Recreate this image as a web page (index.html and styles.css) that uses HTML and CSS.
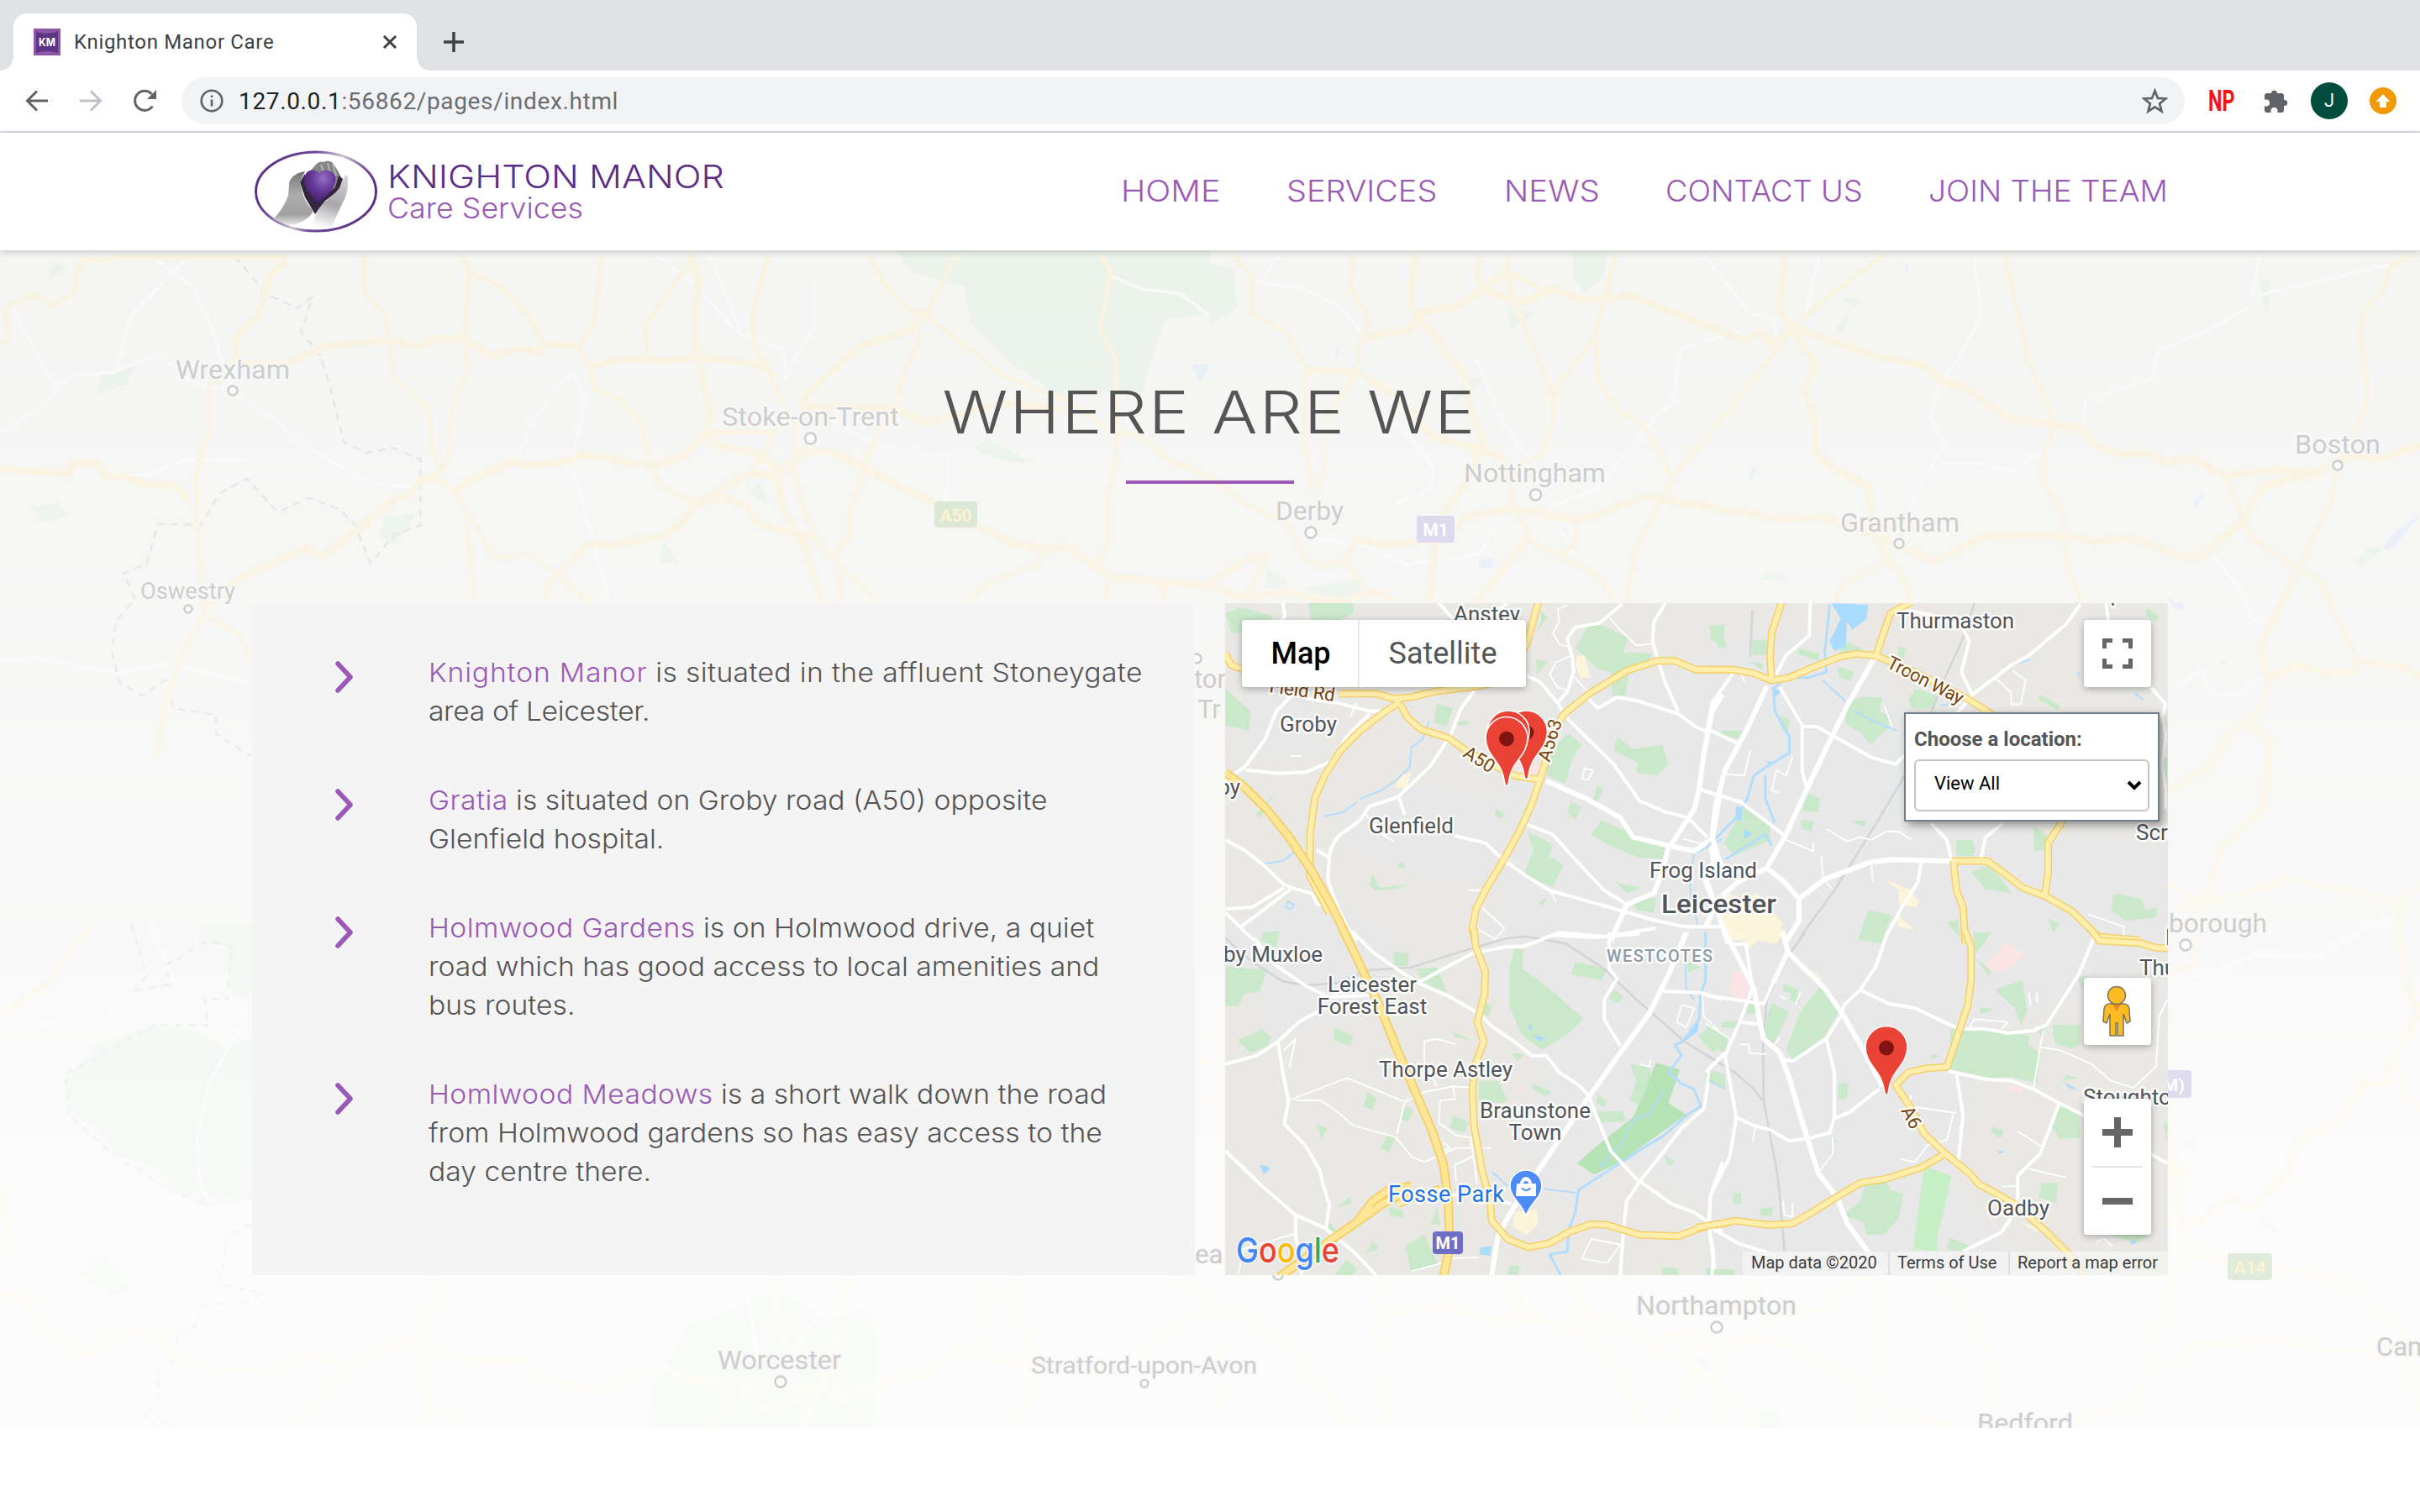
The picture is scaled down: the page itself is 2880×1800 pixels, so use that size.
FILE: index.html
```html
<!DOCTYPE html>
<html lang="en">
<head>
<meta charset="utf-8">
<title>Knighton Manor Care</title>
<link rel="stylesheet" href="styles.css">
</head>
<body>
<div class="browser">
  <div class="tabstrip">
    <div class="tab">
      <svg class="favicon" viewBox="0 0 32 32"><rect width="32" height="32" fill="#8e55a8"/><path d="M3 4q13 4 26-1v26q-13-4-26 0z" fill="#5d3584"/><text x="6" y="20.500" textLength="20" lengthAdjust="spacingAndGlyphs">KM</text></svg>
      <span class="tab-title">Knighton Manor Care</span>
      <svg class="tab-close" viewBox="0 0 18 18"><path d="M2 2L16 16M16 2L2 16"/></svg>
    </div>
    <svg class="new-tab" viewBox="0 0 26 26"><path d="M13 1V25M1 13H25"/></svg>
  </div>
  <div class="toolbar">
    <div class="nav-buttons">
      <svg viewBox="0 0 28 28" class="ico"><path d="M27 14H3M14 2.500L2.500 14L14 25.500"/></svg>
      <svg viewBox="0 0 28 28" class="ico off"><path d="M1 14H25M14 2.500L25.500 14L14 25.500"/></svg>
      <svg viewBox="0 0 28 28" class="ico"><path d="M23.500 20.500A11.500 11.500 0 1 1 22.500 6"/><path d="M28 1V12H17z" class="solid"/></svg>
    </div>
    <div class="omnibox">
      <svg viewBox="0 0 28 28" class="info"><circle cx="14" cy="14" r="12.300"/><path d="M14 12.500V20.500M14 7.500V10"/></svg>
      <span class="url"><b>127.0.0.1</b>:56862/pages/index.html</span>
      <svg viewBox="0 0 30 30" class="star"><path d="M15 3L18.300 11.500L27.500 12L20.400 17.800L22.800 26.700L15 21.700L7.200 26.700L9.600 17.800L2.500 12L11.700 11.500z"/></svg>
    </div>
    <span class="np">NP</span>
    <svg viewBox="0 0 28 28" class="puzzle"><path d="M0 8q0-3 3-3H8V4a3.700 3.700 0 0 1 7 0V5H20q3 0 3 3V13H24.500a3.600 3.600 0 0 1 0 7H23V25q0 3-3 3H15.500V26a4 4 0 0 0-8 0V28H3q-3 0-3-3V20.500H2a4 4 0 0 0 0-8H0z"/></svg>
    <span class="avatar">J</span>
    <svg viewBox="0 0 32 32" class="update"><circle cx="16" cy="16" r="16" fill="#f29900"/><path d="M16 8L24.500 17H20V24H12V17H7.500z" fill="#fff"/></svg>
  </div>
</div>

<header class="site-header">
  <div class="logo">
    <svg class="logo-mark" viewBox="0 0 146 98">
      <defs>
        <linearGradient id="ring" x1="0" y1="0" x2="1" y2="0"><stop offset="0" stop-color="#5b2d87"/><stop offset=".5" stop-color="#6d4596"/><stop offset=".72" stop-color="#c9c3cf"/><stop offset=".9" stop-color="#7a569f"/><stop offset="1" stop-color="#5b2d87"/></linearGradient>
        <linearGradient id="ring2" x1="0" y1="0" x2="1" y2="0"><stop offset="0" stop-color="#5b2d87"/><stop offset=".12" stop-color="#7a569f"/><stop offset=".3" stop-color="#c9c3cf"/><stop offset=".45" stop-color="#6d4596"/><stop offset="1" stop-color="#5b2d87"/></linearGradient>
        <linearGradient id="skin" x1=".5" y1="0" x2=".5" y2="1"><stop offset="0" stop-color="#777"/><stop offset=".45" stop-color="#adadad"/><stop offset=".8" stop-color="#a0a0a0"/><stop offset="1" stop-color="#e8e8e8"/></linearGradient>
        <linearGradient id="palm" x1=".6" y1="0" x2=".4" y2="1"><stop offset="0" stop-color="#d4d0d6"/><stop offset=".55" stop-color="#a9a7ab"/><stop offset="1" stop-color="#fafafa"/></linearGradient>
        <radialGradient id="heart" cx=".6" cy=".25" r=".8"><stop offset="0" stop-color="#9a6fc4"/><stop offset=".45" stop-color="#663a96"/><stop offset="1" stop-color="#3a1a66"/></radialGradient>
      </defs>
      <path d="M1.500 49A71.500 47 0 0 1 144.500 49" fill="none" stroke="url(#ring)" stroke-width="3"/>
      <path d="M144.500 49A71.500 47 0 0 1 1.500 49" fill="none" stroke="url(#ring2)" stroke-width="3"/>
      <path d="M64 27L72 18Q77 12 82 14Q87 11 92 14L99 24L103 32L102 44L80 56L60 46z" fill="#858585"/>
      <path d="M79 17L83 28M87 15L90 27M93 17L97 30" stroke="#b4b4b4" stroke-width="2" fill="none"/>
      <path d="M54 38L60 28L62 44L76 60L96 44L100 30L105 34L100 48L84 60L72 76L60 56z" fill="#33273d"/>
      <path d="M60 25Q52 26 47 30Q40 36 41 42L40 54Q34 70 22 82L40 89Q56 88 66 78L70 72Q58 60 56 46L54 38z" fill="url(#skin)"/>
      <path d="M108 29Q112 30 111 38Q111 52 105 62L92 90Q80 94 70 90Q71 78 76 70Q82 62 92 54Q102 46 104 38z" fill="url(#palm)"/>
      <path d="M60 30C63 22 72 22 77 27C83 21 93 24 96 31C99 42 88 52 76 63C66 54 56 42 60 30z" fill="url(#heart)"/>
    </svg>
    <svg class="logo-words" viewBox="0 0 400 98">
      <text x="-2" y="44.500" class="word-1" textLength="401" lengthAdjust="spacingAndGlyphs">KNIGHTON MANOR</text>
      <text x="-2" y="80.500" class="word-2" textLength="233" lengthAdjust="spacingAndGlyphs">Care Services</text>
    </svg>
  </div>
  <nav class="menu">
    <a class="m1"><span>HOME</span></a><a class="m2"><span>SERVICES</span></a><a class="m3"><span>NEWS</span></a><a class="m4"><span>CONTACT US</span></a><a class="m5"><span>JOIN THE TEAM</span></a>
  </nav>
</header>

<section class="where">
  <svg class="backdrop" viewBox="0 298 2880 1402">
    <defs><linearGradient id="fade" x1="0" y1="0" x2="0" y2="1"><stop offset="0" stop-color="#fff" stop-opacity="0"/><stop offset=".25" stop-color="#fff" stop-opacity=".12"/><stop offset=".85" stop-color="#fff" stop-opacity=".66"/><stop offset="1" stop-color="#fff" stop-opacity=".7"/></linearGradient></defs>
    <rect x="0" y="298" width="2880" height="1402" fill="#f5f5f4"/>
    <g transform="translate(0 300) scale(.91837 .38265)">
      <path class="park" d="M1160,-5 1568,-5 1568,190 1510,210 1490,350 1480,440 1370,440 1310,350 1260,230 1250,110 1180,60zM500,825 540,815 510,910 490,880zM130,380 175,355 165,410 125,445zM40,795 75,780 90,820 55,840zM860,890 880,975 855,960zM985,715 995,785 968,750zM1280,580 1335,655 1300,650 1262,610zM70,30 90,50 62,85z"/>
      <path class="lake" d="M1545,350 1568,350 1555,405z"/>
      <path class="lane" d="M15,170 70,415 95,385 145,375 205,320 250,405 300,430 350,510 400,610 480,720 530,730 545,700M95,385 40,500 0,560M200,20 250,110 275,240 300,430M245,15 220,70 170,200 150,370M850,10 900,100 955,250 1015,300 1020,380M920,10 960,250M1055,100 1055,230 1015,400M740,375 690,520 670,640M740,375 760,450 740,650 790,1090M0,1270 50,1265 150,1310 220,1280 320,1340M130,690 190,695 235,648 320,648M1440,75 1480,115 1530,130 1568,200M1060,500 1140,600 1230,640 1225,780"/>
      <path class="frontier" d="M305,15 345,130 385,175 405,140 390,250 415,320 430,440 445,590 475,625 510,610 545,645 545,850 510,880 480,970 460,850 440,800 400,765 360,810 320,705 285,750 260,850 205,845 190,970 160,1000 175,1080 150,1150 145,1250 155,1340 185,1380 215,1330 225,1420 280,1440 280,1500 325,1568"/>
      <path class="road" d="M110,20 130,28 155,15 370,15M110,20 100,60 95,130 68,168 45,130 5,175 12,265 0,290M470,10 473,130 500,200 510,390 555,490 560,620 570,670M305,350 270,420 270,560 255,680 255,850 265,1130 310,1190 325,1280M265,1130 235,1250 215,1400 205,1568M600,10 607,60 602,250 605,375 588,450 580,650 565,700 590,745 615,850 640,945 665,950 685,935 765,1090M605,850 615,1090M607,60 650,110 685,200 705,285M895,30 835,230 840,325M995,10 975,200 978,290 1000,380 1010,450 1030,540 1030,700 1045,830 1060,900 1080,960 1140,1090M1090,1000 1090,1090M750,295 765,360 770,425 805,460 830,530 845,668 855,725 900,785M765,905 710,1030 705,1090M915,560 1005,560 975,680M1125,10 1145,95 1180,185 1200,195 1300,385 1380,460 1440,555 1480,575 1510,640 1568,700M1240,10 1200,195M1190,220 1190,290 1175,350 1160,470 1120,650 1115,720 1100,800 1100,890 1075,950M1425,10 1440,60 1425,240 1445,330 1450,560 1435,800 1435,900 1420,970M1350,925 1345,970 1275,1035 1255,1090M780,10 770,225 750,295M1440,1010 1430,1090M1490,1025 1510,1050 1507,1090"/>
      <path class="road wide" d="M0,672 90,692 95,655 125,655 135,695 160,700 190,725 225,725 245,770M370,25 350,70 335,200 305,270 305,350 370,350 425,290 505,275 545,295 560,270 600,270 640,325 675,300 695,312 705,285 750,295M570,700 545,710 530,760 510,770 460,870 415,950 395,920 305,1025 270,1100M590,745 610,710 665,650 680,665 740,648 755,628 845,668 885,635 915,560M895,10 905,90 900,250 905,325 920,500 915,560 925,600 985,630 1005,670 1015,800 1045,930 1065,1090M760,360 810,330 860,340 905,325 985,350 1005,390M900,785 885,840 860,880 790,915 765,905M900,785 940,765 965,790 985,850 1055,890M900,785 970,690 1000,695 1030,650 1045,620 1075,620 1120,670 1160,725 1215,785 1310,905 1350,925 1380,915 1440,1010 1568,1040M1200,195 1175,250 1120,285 1045,440 1040,480 1160,485 1200,530 1300,470 1380,490"/>
    </g>
    <g transform="translate(1440 300) scale(.91837 .33333)">
      <path class="park" d="M0,40 30,60 35,200 0,260zM470,0 515,0 510,90 485,145 470,90zM385,190 420,220 390,275zM820,165 845,170 835,200zM830,210 820,300 812,270zM335,450 355,450 330,520 310,530zM1360,110 1375,90 1370,230zM1500,1055 1520,1060 1495,1120 1483,1110zM710,1170 725,1145 755,1165zM75,1130 100,1170 90,1200 70,1200zM120,1200 200,1170 205,1230 160,1250z"/>
      <path class="lake" d="M350,1100 365,1090 368,1125 348,1130zM1568,940 1530,1010 1520,1065 1535,1050zM1287,865 1275,890 1277,915zM712,755 700,785 697,830zM905,45 900,60 905,80zM170,320 162,360 165,385z"/>
      <path class="lane" d="M90,10 65,110 120,130 170,200 200,300M640,10 700,220 730,240 735,330M790,10 770,240M990,10 1000,230 970,380 945,470 935,590 950,690 905,920M1360,10 1350,160 1530,45M1350,190 1300,270 1230,350 1220,450 1135,530 1130,630M690,280 610,345 600,530 560,650 500,850 440,910M345,380 370,560 410,730M130,1020 200,1050 255,1115 350,1080 375,940M945,755 1000,755 1035,780 1085,710M240,600 290,770 285,850 240,900M440,910 470,1080M1300,1080 1345,1250"/>
      <path class="road" d="M30,10 55,90 52,215 100,290 125,420 122,620 130,860M0,800 45,900 100,970M185,10 182,130 208,250 195,310 190,420M190,428 150,600 150,740 140,860M350,10 345,90 350,130M385,10 385,70 440,145M385,70 395,180 440,480 445,600 430,720 400,760M525,10 510,170 500,300 450,480 445,560M500,300 503,460 530,570 560,610 600,810 585,880 550,1080 540,1250M875,10 795,170 755,270 715,420 650,640 600,800M1030,10 1060,380 1095,610 1082,720 1082,830 1105,930 1110,1130 1130,1250M1560,10 1530,50 1520,140 1495,210 1490,290 1500,520 1480,680 1460,760 1455,880 1410,1130 1390,1250M1315,800 1350,1020 1410,1130 1440,1180 1455,1250M475,960 475,1030 455,1090M395,915 415,1030 500,1150 525,1250M190,1025 175,1090 200,1200M880,1100 820,1190 810,1250M75,1080 45,1240M100,970 125,1100 150,1125 175,1090M380,730 395,915"/>
      <path class="road wide" d="M265,10 260,200 290,300 330,440 340,590 355,680 330,830 300,940 290,1060 285,1250M125,420 190,428 240,510 290,660 380,730M350,130 400,180 415,170 445,130 475,168 510,168 545,155 695,320 710,285 730,325 755,270M385,70 320,195 280,210 260,275 195,310M745,10 738,210 785,400 770,490 785,620 785,710 800,760 855,840 860,1010 905,1200 905,1250M755,270 860,370 925,405 950,465 980,485 1035,595 1130,630 1145,685 1180,725 1215,718 1235,750 1275,740 1315,800 1385,775 1430,790 1370,830 1350,890 1340,960 1285,1085 1260,1085 1190,1022 1145,1035 1110,1015 1005,1012 940,1105 860,1010M1568,690 1515,740 1480,730 1430,790M395,915 475,960 565,875 745,955 790,945 860,1010M415,1010 345,1250M395,915 330,945 310,1020 230,1048 190,1025M0,1180 45,1100 75,1080M0,1190 45,1235 95,1215 165,1250 215,1210 240,1250"/>
    </g>
    <g transform="translate(0 1100) scale(.91837 .44643)">
      <path class="park" d="M200,272 260,285 290,335 327,300 327,730 260,750 230,720 190,640 150,620 135,560 90,500 82,420 115,350 115,330zM265,0 327,0 327,190 300,200 295,60 255,50zM890,1070 940,1040 970,1000 1010,980 1060,1010 1070,1060 1125,1020 1137,1120 1130,1343 840,1343 845,1240zM120,880 160,920 155,960 180,980 145,990 105,940z"/>
      <path class="lane" d="M0,230 35,235 50,268 145,240 160,170M195,0 225,150 290,175 320,240 270,430 255,570 260,700 270,740M240,760 200,800 185,870 100,880 30,970M95,1145 50,1190 20,1270 0,1275M440,936 455,1050 465,1190 480,1343M640,950 560,1065M1420,936 1455,1080 1490,1230 1500,1343M740,1245 720,1343M920,950 930,980 970,1000 985,1200M1010,980 1065,1030 1030,1130"/>
      <path class="frontier" d="M170,0 190,140 170,180 220,160 215,110 270,45 300,60 295,200 265,200 270,270 200,270 130,350 85,400 90,510 150,620 230,720 265,750 327,730M327,800 295,830 285,960 340,985 320,1010 265,1015 250,1085 230,1090 230,1160 205,1190 205,1270 185,1310 205,1340 220,1320 230,1340"/>
      <path class="road" d="M120,0 85,80 70,150 0,240M450,1185 400,1300 375,1343M545,1100 555,1070 560,936M545,1100 555,1280 550,1343M1005,936 1010,1110 1070,1170 1110,1343M970,1235 915,1343M1280,936 1275,970 1290,1155M1320,936 1315,1010 1335,1180 1320,1343M1275,960 1315,1010M555,1280 590,1300 615,1343M0,700 10,850 0,890M970,1235 990,1300 1040,1270"/>
      <path class="road wide" d="M0,980 35,1010 60,1080 100,1140 120,1145 145,1085 210,1100 225,1150 280,1195 355,1190 400,1140 450,1185 545,1100M550,1135 610,1162 680,1165 695,1215 780,1245 830,1195 870,1185 890,1215 930,1225 1000,1230 1085,1250 1140,1235 1170,1205 1195,1210 1245,1128 1290,1160 1335,1175 1450,1205M1105,936 1088,1010 1090,1080 1075,1160 1040,1343M1520,936 1568,1020 1495,1110 1470,1190M1540,370 1568,370M1540,455 1568,470"/>
    </g>
    <g transform="translate(1440 1500) scale(.91837 .33333)">
      <path class="park" d="M710,540 738,540 738,600 710,600z"/><path class="lake" d="M635,345 652,400 625,385z"/>
      <path class="lane" d="M110,75 160,180 205,210M410,80 405,250 380,400 345,500 325,600M1110,54 1095,170 1110,380 1075,540M1155,54 1205,150 1235,295 1275,305M1360,80 1375,200 1370,250 1405,340 1405,440 1420,600M1568,400 1500,600"/>
      <path class="road" d="M240,54 210,130 215,185 208,360 220,430 232,600M480,180 500,290 540,460 560,600M865,54 863,280 855,470 840,600M710,54 715,140M625,260 625,390 600,600M660,345 660,600M625,310 640,310 655,345 665,345M945,54 950,100 995,240 1010,330 1013,520 1025,560M1255,0 1245,180 1212,320 1205,470 1208,600M5,180 18,470 5,600M405,150 375,54"/>
      <path class="road wide" d="M0,155 35,180 115,350 150,460 165,550 180,600M215,185 240,188 305,160 375,225 405,150M395,185 490,270 510,230M470,54 490,180 560,280 640,400 690,530 708,600M565,280 655,245M655,245 655,340 690,285 720,215 745,190 800,175 830,65 865,54M690,285 740,295 855,470 890,550 965,600M1215,385 1250,370 1275,305 1390,285 1440,322 1490,325 1555,345M1205,470 1180,530 1145,560 1130,600M1500,160 1540,240 1555,300 1557,460 1568,540"/>
    </g>
    <g transform="translate(2560 700) scale(.33333 .53571)">
      <path class="park" d="M100,1228 158,1220 158,1252z"/>
      <path class="lake" d="M55,22 120,38 120,48 80,45zM390,1408 420,1408 455,1430 450,1440zM235,168 285,155 265,165z"/>
      <path class="lane" d="M60,235 175,182 225,242 340,230 350,207 415,200M130,860 200,860 370,815 590,820 790,745 885,732M60,915 130,820M130,1312 230,1410 520,1480M360,1385 570,1408 750,1360 960,1325M320,0 365,72 430,78"/>
      <path class="road" d="M60,655 205,722M75,720 430,660 460,643 890,697 960,660M610,0 738,162M850,1065 900,1080 893,1110 960,1165M165,770 145,800 155,838 60,855M120,1465 90,1510 75,1568"/>
      <path class="road wide" d="M495,0 390,130 420,200 400,265 340,300 290,318 200,400 60,455M340,300 425,337 405,487 250,578 210,665 165,705M420,200 530,170 620,193 725,185 738,162 910,178 960,198M890,697 878,780 905,820 910,890 958,940 850,1065 835,1100 760,1100 670,1185 560,1212 500,1260 488,1300 350,1382 278,1352 190,1400 150,1412 60,1410M60,1180 90,1330 105,1420 150,1485 280,1497M430,1510 620,1527 740,1568M85,1285 130,1312"/>
    </g>
    <rect x="0" y="298" width="2880" height="1402" fill="url(#fade)"/>
    <g class="shields">
      <rect x="1112" y="597" width="51" height="31" rx="4" fill="#dce8d6"/><text x="1137.500" y="621" fill="#fdf3d0">A50</text>
      <rect x="1686" y="614" width="45" height="32" rx="4" fill="#dddaee"/><text x="1708.500" y="638" fill="#fff">M1</text>
      <rect x="2651" y="1492" width="53" height="32" rx="4" fill="#dfecdb"/><text x="2677.500" y="1516" fill="#fdf3d0">A14</text>
      <rect x="2555" y="1274" width="53" height="33" rx="4" fill="#dfdcf0"/><text x="2587" y="1299" fill="#fff">M)</text>
    </g>
    <g class="towns">
      <text x="209" y="451" textLength="136" lengthAdjust="spacingAndGlyphs">Wrexham</text><circle cx="277" cy="465" r="5.500"/>
      <text x="859" y="507" textLength="211" lengthAdjust="spacingAndGlyphs">Stoke-on-Trent</text><circle cx="964.500" cy="522" r="6.500"/>
      <text x="167" y="713" textLength="113" class="minor" lengthAdjust="spacingAndGlyphs">Oswestry</text><circle cx="224" cy="725" r="4.500"/>
      <text x="1742" y="574" textLength="169" lengthAdjust="spacingAndGlyphs">Nottingham</text><circle cx="1827.500" cy="589" r="6.500"/>
      <text x="1518" y="619" textLength="81" lengthAdjust="spacingAndGlyphs">Derby</text><circle cx="1560" cy="634" r="6.500"/>
      <text x="2190" y="633" textLength="142" lengthAdjust="spacingAndGlyphs">Grantham</text><circle cx="2260" cy="647" r="5.500"/>
      <text x="2731" y="540" textLength="102" lengthAdjust="spacingAndGlyphs">Boston</text><circle cx="2782" cy="554" r="5.500"/>
      <text x="2581" y="1110" textLength="117" lengthAdjust="spacingAndGlyphs">borough</text><circle cx="2601" cy="1125" r="6.500"/>
      <text x="854" y="1630" textLength="147" lengthAdjust="spacingAndGlyphs">Worcester</text><circle cx="929" cy="1645" r="6.500"/>
      <text x="1227" y="1635" textLength="269" class="minor" lengthAdjust="spacingAndGlyphs">Stratford-upon-Avon</text><circle cx="1362" cy="1647" r="4.500"/>
      <text x="1947" y="1565" textLength="191" lengthAdjust="spacingAndGlyphs">Northampton</text><circle cx="2043" cy="1580" r="6.500"/>
      <text x="2353" y="1705" textLength="114" lengthAdjust="spacingAndGlyphs">Bedford</text>
      <text x="2828" y="1614">Cam</text>
      <text x="1421" y="819">ton</text><text x="1425" y="855">Tr</text><circle cx="1424" cy="784" r="5.500"/>
      <text x="1422" y="1504">ea</text><circle cx="1521" cy="1518" r="5.500"/>
    </g>
  </svg>

  <div class="content">
    <h1>WHERE ARE WE</h1>
    <div class="rule"></div>
    <div class="columns">
      <ul class="homes">
        <li><svg class="chev" viewBox="0 0 24 38"><path d="M4 3L19 19L4 35"/></svg><p><span class="roomy"><a>Knighton Manor</a> is situated in the affluent Stoneygate</span><br><span class="tight">area of Leicester.</span></p></li>
        <li><svg class="chev" viewBox="0 0 24 38"><path d="M4 3L19 19L4 35"/></svg><p><a>Gratia</a> is situated on Groby road (A50) opposite<br>Glenfield hospital.</p></li>
        <li><svg class="chev" viewBox="0 0 24 38"><path d="M4 3L19 19L4 35"/></svg><p><a>Holmwood Gardens</a> is on Holmwood drive, a quiet<br>road which has good access to local amenities and<br>bus routes.</p></li>
        <li><svg class="chev" viewBox="0 0 24 38"><path d="M4 3L19 19L4 35"/></svg><p><a>Homlwood Meadows</a> is a short walk down the road<br>from Holmwood gardens so has easy access to the<br>day centre there.</p></li>
      </ul>

      <div class="map">
        <svg class="tiles" viewBox="0 0 1122 800">
          <rect width="1122" height="800" fill="#e9e8e4"/>
          <path fill="#e8e8e8" d="M130 250L230 215L330 235L400 60L520 90L640 30L720 40L790 100L860 200L960 270L1122 290V420L1000 470L880 520L900 600L860 690L960 800H560L580 720L470 660L400 720L350 640L380 560L300 430L340 330L240 330L150 290zM0 390L120 340L200 400L180 480L60 520zM30 20L110 110L120 180L20 180z"/>
          <g transform="translate(-8 -8) scale(.38265 .33333)">
            <path class="g" d="M1110,185 1150,100 1200,105 1275,150 1260,200 1350,205 1340,225 1280,255 1265,355 1225,355 1220,270 1180,260zM1240,500 1290,545 1380,530 1400,600 1365,640 1300,630 1305,595 1230,550zM1090,490 1130,530 1100,580 1080,670 1020,640 1040,540zM960,840 1040,885 1030,930 1075,960 1040,1035 1000,1020 950,990 980,910zM1190,800 1300,850 1390,895 1380,940 1300,930 1200,880 1160,850zM680,385 730,400 710,465 670,450zM22,330 60,370 100,410 95,480 22,460zM22,60 70,40 170,70 160,90 75,90 70,130 40,130zM280,24 420,24 420,60 380,84 290,84zM1235,1020 1310,1040 1270,1060zM1290,1090 1360,1075 1355,1130 1300,1120zM480,990 500,1040 590,1030 550,1045 490,1050 470,1030zM1530,110 1568,100 1568,165 1530,155zM990,225 1025,235 990,280zM865,760 890,775 880,795 858,780zM1095,735 1130,750 1110,800 1088,770zM1180,675 1195,690 1180,735 1165,725zM115,780 175,705 130,790zM140,1200 185,1195 185,1230 130,1230zM410,1195 440,1215 435,1230 405,1230zM1000,50 1025,75 990,125 1005,80zM745,445 780,445 775,460 740,460zM570,945 585,970 555,970zM1005,1085 1020,1080 1010,1105 998,1095z"/>
            <path class="sand" d="M1115,215 1140,210 1155,290 1125,290 1110,250zM560,640 600,630 585,690 550,680z"/>
            <path class="pink" d="M930,590 1000,595 1000,630 930,625z"/>
            <path class="stream" d="M655,445 635,510 600,540 595,610 550,660 510,690 440,725M430,735 390,770 330,785M255,895 200,945 145,955M1568,865 1480,920 1465,1000 1470,1080 1490,1170M215,1090 235,1100 225,1118 210,1110z"/>
            <path class="w" d="M200,24 207,70 190,100M685,24 730,80M855,60 900,24M235,345 180,410 145,510 85,605 22,660M85,620 190,632 270,628 350,590 400,500 470,420M210,330 280,365 370,380 470,410 540,410M800,330 755,400 720,500 660,605 560,715 470,750 440,800 370,860 350,900 345,930 340,1010 360,1080 400,1180 430,1230M560,715 580,780M735,855 830,880 885,940 960,1000 1030,1050 1200,1105 1350,1155 1450,1180 1568,1180M22,870 80,905 140,960 205,1030 240,1045 290,1060 310,1100 380,1120M22,1117 105,1110 205,1040M22,1130 110,1228M65,1185 225,1045M960,285 1000,305 1055,380 1080,430 1150,510 1230,600 1310,730 1390,770 1460,790 1520,860M1055,380 1085,340 1105,270 1100,215 1085,150 1110,110 1185,95 1255,28M1150,365 1180,400 1240,360 1310,375 1430,420 1490,470 1530,485M1390,24 1355,90 1350,160 1365,220 1390,310 1430,410M1500,690 1550,710M955,812 1040,850 1110,940 1200,1050 1270,1100M1000,1228 1060,1200 1200,1215 1360,1185M305,905 340,930"/>
            <path class="w big" d="M1568,350 1535,410 1525,480 1510,560 1495,690 1480,760 1440,830 1400,900 1380,980 1355,1060 1270,1100 1220,1230M1020,660 1140,720 1250,790 1290,860 1400,890 1480,910 1530,870 1540,950 1510,1000 1530,1060 1568,1150M1560,700 1535,870"/>
            <path class="t" d="M1085,30 1055,45 1060,90 1040,130 1060,170 1090,180M1100,210 1050,235 1030,280 1055,325 1085,335M1215,75 1250,120 1300,175 1345,170M1110,290 1160,360M800,1090 890,1185 860,1225 810,1190M1130,650 1140,615 1165,620 1150,655zM455,775 510,850 545,875M1445,865 1510,885M780,1050 820,1050 825,1080M1030,1050 1050,1090M225,570 260,570M410,430 430,380"/>
            <g class="casing"><g id="ya"><path d="M22,205 40,245 75,260M375,347 490,347 545,365 600,360 680,338 800,322 900,300 960,165 995,22M555,385 520,410 440,480 380,550 330,640 300,720 285,850 285,1000 330,1100 345,1130M555,385 565,360M565,385 590,435 630,475 715,505 770,550 860,605 920,640 1000,655M1000,655 1015,600 1030,500 1075,420 1150,350 1270,265 1365,230 1420,230 1485,262 1600,262M1000,655 975,740 940,830 890,935 830,1050 800,1120 790,1190 800,1240"/></g></g>
            <use href="#ya" class="core"/>
            <g class="casing mway"><g id="ma"><path d="M22,630 80,680 150,760 220,860 290,980 350,1100 410,1240"/></g></g>
            <use href="#ma" class="core mcore"/>
          </g>
          <g transform="translate(572 -8) scale(.38265 .33333)">
            <path class="g" d="M435,385 480,360 550,360 540,410 575,430 560,480 510,530 485,490 435,455zM120,755 200,820 200,870 90,925 55,880zM10,105 60,100 55,140 65,180 40,185zM145,155 190,155 190,210 145,210zM650,330 720,355 710,400 640,400 630,370zM290,185 355,205 350,230 285,205zM410,250 460,270 450,300 415,290zM825,985 880,960 920,1010 950,1060 870,1045zM780,870 830,870 838,910 830,930 780,925zM1270,1060 1355,1080 1370,1120 1405,1110 1400,1145 1310,1160 1260,1120zM505,1120 580,1140 545,1228 475,1228zM750,1165 785,1155 790,1220zM315,700 355,720 350,770 300,765zM50,480 115,480 110,510 50,495zM1020,820 1070,860 1060,905 1020,910zM1040,350 1100,390 1095,405 1035,370zM1370,40 1410,70 1400,90 1370,70zM600,180 625,185 610,230 595,215zM295,800 335,800 330,840 300,830zM455,800 500,800 490,825zM1425,575 1436,575 1436,660 1425,640zM1065,1150 1100,1170 1080,1200zM220,420 260,440 255,485 235,470zM410,150 485,185 480,205 420,200zM140,235 180,240 175,265z"/>
            <path class="sand" d="M60,1060 120,1080 160,1060 210,1130 240,1170 220,1228 70,1228 30,1130zM560,1010 640,1050 660,1090 655,1110 600,1100 600,1050zM590,1130 650,1190 600,1180z"/>
            <path class="b" d="M390,24 505,30 500,80 455,120 440,90 435,180 400,195 385,160 420,80zM95,750 115,755 110,800 90,800zM205,325 235,340 215,360zM120,830 145,850 120,865zM190,590 215,590 200,605z"/>
            <path class="stream two" d="M385,30 375,150 370,200 375,270 320,290 250,290 210,330 215,410 260,500 260,560 200,600 150,640 130,720 95,790 0,900M185,640 185,720 215,810M205,890 185,850 60,940"/>
            <path class="stream" d="M365,300 435,375M460,410 530,450 595,480M1155,270 1165,285M1335,345 1360,370M730,390 780,380M950,245 1010,225"/>
            <path class="rail" d="M835,24 800,150 740,300 700,420 640,600 520,830 400,1050 310,1190 290,1228M145,50 138,215"/>
            <path class="w" d="M325,24 322,140 250,210 205,310M85,275 20,380 0,500M230,325 300,460 300,620 315,690M300,465 345,465 400,500 515,575 590,600 620,565M0,695 110,735 240,850M600,45 700,65 800,115 820,160 795,270 830,355M1165,28 1120,100 1000,215 950,245 900,290 830,350 780,420M1245,24 1252,84M670,950 660,1020 610,1110 555,1228M700,810 750,870 765,945M925,810 870,860 855,940M1385,325 1430,385 1420,430 1430,500 1420,600 1430,700 1430,760M0,470 100,525"/>
            <path class="w big" d="M190,320 130,470 60,620 30,750 20,860 40,940 70,1010M525,220 440,390 380,530 330,650 290,750 245,860 190,970 245,1020 290,1080 290,1160 250,1230M290,1080 370,1010 510,950 580,940 765,945M190,970 100,1020 40,1080 0,1180M0,1010 30,1100 70,1240"/>
            <path class="t" d="M375,830 440,875 480,860 515,870 560,840 600,840 640,870M955,265 995,300 980,385 950,385 950,345 900,290M555,390 580,465M1190,1135 1300,1180 1300,1228M60,635 120,640 138,550M270,570 250,640 220,620 205,695 225,700M360,930 365,1010 390,1040M515,960 520,1020M250,870 335,910 335,880M110,280 125,310"/>
            <g class="casing"><g id="yb"><path d="M235,24 205,130 200,220 205,300M0,262 90,262 150,275 205,300 260,290 340,250 420,215 470,205 530,212 600,245 720,310 820,370 900,430M640,20 600,45 575,60 550,140 530,212M765,945 875,945 930,990 985,1040 1055,1070 1140,1125 1220,1215 1350,1228M770,945 780,1050 800,1110 808,1240M1055,1070 1065,980 1065,880 1105,810 1090,700"/></g></g>
            <use href="#yb" class="core"/>
          </g>
          <g transform="translate(-8 392) scale(.38265 .33333)">
            <path class="g" d="M920,60 950,60 945,130 1030,200 1135,310 1090,360 1005,420 940,360 905,260 905,130zM1280,470 1340,480 1350,540 1320,620 1280,600 1300,530zM22,120 90,130 150,130 130,210 80,220 60,265 22,260zM60,385 135,345 165,375 150,410 100,430zM615,130 680,125 710,215 640,180zM1110,105 1210,130 1190,170 1095,150zM810,530 870,530 900,600 880,610 810,600zM580,1120 640,1080 685,1190 600,1210zM730,655 780,680 765,715 720,700zM465,570 490,590 480,635 450,620zM360,340 420,370 410,405 360,385zM545,70 590,75 590,120 545,120zM525,725 550,735 530,785 505,770zM580,620 608,635 590,675 565,665zM980,540 1035,570 1020,585 975,560zM1490,370 1540,330 1568,400 1540,430zM1180,640 1260,640 1265,675 1180,680zM150,0 190,0 180,55 140,45zM530,980 570,990 575,1020 535,1010zM680,980 690,1045 660,1040zM480,1100 500,1130 460,1145zM400,1170 430,1200 420,1224 360,1224zM305,685 340,700 320,735zM1380,1195 1430,1200 1430,1224 1380,1224zM905,1190 940,1190 930,1224 900,1224zM730,355 790,385 735,375zM1385,790 1420,820 1400,835zM910,430 950,435 930,460zM1230,200 1260,230 1240,255 1215,235zM1455,100 1500,125 1460,145zM1180,580 1205,600 1200,625 1175,610zM410,945 415,970 370,980zM830,255 850,260 840,300 820,290zM340,1030 370,1070 340,1065z"/>
            <path class="g deep" d="M1360,465 1435,490 1400,610 1455,650 1250,820 1170,865 1115,825 1180,760 1290,660 1330,560z"/>
            <path class="sand" d="M920,1000 990,990 995,1040 960,1080 915,1050z"/>
            <path class="b" d="M130,830 155,835 158,850 140,865zM980,370 1020,375 1000,390zM815,1125 850,1120 845,1155 812,1150zM967,322 978,350 967,345zM1445,385 1495,310 1490,355 1455,385z"/>
            <path class="stream two" d="M1515,0 1515,170 1500,220 1495,310 1445,390 1420,400 1440,440 1400,500 1440,540 1480,560 1500,620 1460,650 1380,730 1320,770 1200,860 1120,920 1110,1000 1090,1060 1085,1140 1030,1150 1065,1224"/>
            <path class="stream" d="M1385,560 1340,650 1290,670 1250,760 1185,840M850,855 900,905M1450,60 1455,200 1480,240M1010,915 1110,930"/>
            <path class="rail" d="M22,20 100,100 200,175 270,190 370,180 470,135 600,125 750,70 900,20 960,15 1080,40 1200,130 1300,240 1450,390 1568,475"/>
            <path class="w" d="M22,470 120,440 185,390 250,320 330,270M415,-5 480,70 555,130 620,180 720,230 810,290 850,335 920,390 975,440 1020,440 1060,500 1120,545 1150,580 1170,640 1220,780 1300,880 1410,970 1480,1000 1568,1070M110,20 180,120 220,150 270,190 340,230 470,225M620,180 700,130 790,75 900,50 950,50 1040,10 1170,18 1310,5M1215,0 1215,130 1240,165 1200,240 1200,310 1250,405M22,780 130,900 240,1010 330,1055 420,1140 490,1224M185,390 200,500 218,600 205,685 270,760 315,850 325,900 345,970 335,1055M1375,210 1500,215 1568,240M1568,440 1530,480 1510,630 1440,700 1380,790 1310,890 1270,960 1260,1060 1250,1224M1568,820 1530,940 1525,1040 1545,1224M240,1010 240,1080 260,1224M720,940 800,930 910,970"/>
            <path class="w big" d="M1455,0 1400,150 1340,290 1250,430 1150,590 1060,740 990,860 920,980 870,1080 850,1224"/>
            <path class="t" d="M218,600 400,520 580,605 555,720M240,600 320,600 370,640 420,690 550,730 600,800 640,820 740,770 850,770M580,605 640,570 730,550 800,555M680,550 640,460 640,390 680,380 740,400M690,600 685,680 740,725 800,735M740,890 735,830 790,800M1130,1165 1160,1095 1250,1115 1210,1180zM730,545 735,595 690,600M205,420 240,380 220,485M700,780 720,770 700,750M60,1224 80,1130 240,1075M700,1165 810,1160M1310,470 1340,480 1345,455M1440,260 1480,270 1455,340 1425,320zM1505,220 1510,300 1555,350M785,735 805,900M600,1210 700,1180"/>
            <g class="casing"><g id="yc"><path d="M795,-10 800,50 830,140 828,220 805,320 825,390 800,470 790,560 795,690 820,850 845,960 850,1030 900,1095 965,1125 1030,1110 1090,1070 1160,1042 1210,1045 1310,1080 1430,1085 1500,1055 1590,1035M560,970 620,940 690,915"/></g></g>
            <use href="#yc" class="core"/>
            <g class="casing mway"><g id="mc"><path d="M385,-15 430,90 500,260 560,430 620,590 665,710 700,830 715,960 718,1070 715,1150 700,1230M190,1230 330,1115 430,1035 510,970 560,940 600,930M430,1035 480,960 530,920 600,905"/></g></g>
            <use href="#mc" class="core mcore"/>
          </g>
          <g transform="translate(572 392) scale(.38265 .33333)">
            <path class="g" d="M760,345 870,345 1010,370 1000,400 1040,430 1030,540 950,515 890,520 760,490zM355,195 380,225 415,280 370,370 270,455 250,420 290,290zM205,250 260,285 210,400 185,380 190,300zM900,205 985,170 1000,280 980,330 960,270zM500,885 560,885 575,920 615,935 600,1020 555,1080 500,1080 490,1035 430,1010 480,960zM1100,615 1160,640 1165,735 1100,735 1075,690zM1080,330 1165,330 1165,400 1140,415 1090,400 1080,370zM1045,895 1095,895 1090,965 1035,945zM245,185 290,205 290,250 260,245 265,215 240,210zM120,255 145,235 165,290 130,290zM480,0 560,0 545,40 475,25zM415,535 445,540 440,590 410,600zM830,0 890,0 840,75zM5,320 70,380 60,430 0,400zM15,490 60,510 60,560 10,535zM85,930 110,930 110,970 85,970zM170,985 210,980 205,1015 170,1010zM760,1090 820,1120 800,1140 750,1130zM1420,680 1436,680 1436,740zM0,1200 90,1205 90,1224 0,1224zM850,270 890,270 880,285 855,290zM890,695 925,705 920,735 890,715zM1250,1080 1380,1080 1340,1110zM45,320 105,315 100,345 50,340zM840,90 890,140 880,160zM985,375 1005,385 1000,430zM1390,915 1425,930zM1120,510 1160,520 1110,530zM1155,160 1190,155 1170,200zM700,435 725,440 705,455zM1030,340 1055,345 1045,380z"/>
            <path class="g bright" d="M680,835 765,870 720,1090 720,1140 645,1130 660,1000z"/>
            <path class="pink" d="M90,140 130,140 145,190 120,245 85,240 75,190zM935,35 990,80 960,120 900,145 870,115zM945,550 985,550 985,580 950,570z"/>
            <path class="sand" d="M110,-10 250,-10 220,40 160,30 130,65zM320,130 360,160 355,180 330,160zM970,1030 1040,1060 1030,1070z"/>
            <path class="b" d="M1110,530 1160,565 1130,555zM905,778 930,782 915,790zM1325,1095 1340,1110 1320,1115zM395,742 405,742 403,748z"/>
            <path class="stream" d="M10,530 60,560"/>
            <path class="rail" d="M310,0 255,85 190,240 178,400 180,600 225,880 245,1140M0,435 90,500 150,560 175,600"/>
            <path class="w" d="M125,40 145,200M75,42 125,42M210,180 180,255 0,225M565,0 530,120 480,205 430,260 420,300 375,380 270,460 230,450M480,205 570,255 650,270 740,320 790,345 870,345 940,360 1020,350 1060,330 1110,240 1160,150 1210,10M375,380 400,500 400,660 385,720M540,560 510,585 450,640 400,665M95,660 150,690 200,705 260,745 320,735 390,715M145,200 105,320 60,440 95,660 75,800 15,940 10,1050 25,1150 20,1224M0,500 60,430M105,320 170,328M755,495 870,525 950,530 1020,560 1100,610 1170,650 1436,825M780,510 800,650 785,820M1100,610 1070,700 1040,790 970,870 970,960M0,1045 100,1110 220,1155M950,1020 920,1070 800,1140"/>
            <path class="w big" d="M60,0 150,200 170,330 180,380 230,430 260,520 290,640 320,750 350,860 410,950 440,1040 510,1150 550,1224M240,0 255,70 210,180M255,70 370,200 430,300 490,420 550,550"/>
            <path class="t" d="M820,340 835,310 940,320 920,345M1040,410 1100,420 1200,470 1260,530 1330,555 1400,480 1410,300 1436,240M1050,350 1040,410 1020,555M640,580 630,620 780,645M970,710 1045,765M770,650 750,740 690,760 650,820 605,810M240,960 245,1010 270,1015 270,965M395,730 395,790 350,860M1005,845 1120,875M105,400 135,400 135,430 190,435M920,908 970,905M230,225 250,240M295,210 280,255M1005,215 1010,260M1215,1105 1240,1095 1265,1120M1030,215 1030,250M155,690 145,750M215,400 230,375M0,325 75,380"/>
            <g class="casing"><g id="yd"><path d="M805,-10 825,50 825,170 815,260 780,380 750,480 690,485 630,500 590,545 640,630 680,720 745,790 820,860 850,900 900,930 960,970 1060,1070 1130,1150 1180,1230M745,790 670,840 560,880 480,895 400,950 330,1000 270,1040 195,1045 90,1030 -30,1055M1195,-15 1225,30 1350,38 1400,55 1440,57"/></g></g>
            <use href="#yd" class="core"/>
          </g>
          <g class="labels">
            <text x="272" y="22" textLength="79">Anstey</text>
            <text x="65" y="153" textLength="68">Groby</text>
            <text x="18" y="228" text-anchor="end">Ratby</text>
            <text x="171" y="274" textLength="101">Glenfield</text>
            <text x="505" y="327" textLength="128">Frog Island</text>
            <text x="799" y="30" textLength="140">Thurmaston</text>
            <text x="1084" y="282">Scraptoft</text>
            <text x="116" y="427" text-anchor="end">Kirby Muxloe</text>
            <text x="175" y="463" text-anchor="middle">Leicester</text>
            <text x="175" y="489" text-anchor="middle">Forest East</text>
            <text x="183" y="564" textLength="159">Thorpe Astley</text>
            <text x="369" y="613" text-anchor="middle">Braunstone</text>
            <text x="369" y="639" text-anchor="middle">Town</text>
            <text x="907" y="729" textLength="74">Oadby</text>
            <text x="1088" y="443">Thurnby</text>
            <text x="1021" y="597">Stoughton</text>
            <text x="1119" y="407">B</text>
            <text x="1000" y="-2">Thorpe</text>
            <text class="city" x="519" y="369" textLength="137" lengthAdjust="spacingAndGlyphs">Leicester</text>
            <text class="district" x="454" y="427" textLength="126">WESTCOTES</text>
            <text class="poi" x="194" y="713" textLength="138">Fosse Park</text>
            <text class="rd" transform="translate(786 76) rotate(27)" textLength="99">Troon Way</text>
            <text class="rd" transform="translate(282 182) rotate(32)">A50</text>
            <text class="rd" transform="translate(386 190) rotate(-73)">A563</text>
            <text class="rd" transform="translate(52 106) rotate(8)">Field Rd</text>
            <text class="rd" transform="translate(804 604) rotate(62)">A6</text>
          </g>
          <rect x="247" y="748" width="36" height="27" rx="4" fill="#6f6ec7"/><text class="m-one" x="265" y="769">M1</text>
          <g>
            <path d="M358 730C354 715 339 708 339 694A19 19 0 0 1 377 694C377 708 362 715 358 730z" fill="#4e8cf5" stroke="#fff" stroke-width="1.500"/>
            <path d="M348 692H369V705H347zM352 692A6 8 0 0 1 364 692" fill="#fff" stroke="#fff" stroke-width="2"/><path d="M353.500 696A5 4.500 0 0 0 363 696" fill="none" stroke="#4e8cf5" stroke-width="2"/><path d="M354.500 691A4 6 0 0 1 361.500 691z" fill="#4e8cf5"/>
          </g>
          <defs><g id="pin"><path d="M0 0C-1.500 0-2-1-2.400-4C-5-30-25-35-25-57A25 25 0 0 1 25-57C25-35 5-30 2.400-4C2-1 1.500 0 0 0z" fill="#ea4335" stroke="#fff" stroke-width="1.600"/><circle cy="-56" r="9" fill="#811411"/></g></defs>
          <use href="#pin" x="358.500" y="210"/><use href="#pin" x="337" y="210"/><use href="#pin" x="335" y="217.500"/><use href="#pin" x="787" y="585.500"/>
          <text class="google" x="13" y="785" textLength="123" lengthAdjust="spacingAndGlyphs"><tspan fill="#4285f4">G</tspan><tspan fill="#ea4335">o</tspan><tspan fill="#fbbc05">o</tspan><tspan fill="#4285f4">g</tspan><tspan fill="#34a853">l</tspan><tspan fill="#ea4335">e</tspan></text>
        </svg>
        <div class="overlay">
          <div class="row">
            <div class="type"><span class="on">Map</span><span>Satellite</span></div>
            <div class="btn"><svg viewBox="0 0 36 36"><path d="M2.500 12V2.500H12M24 2.500H33.500V12M33.500 24V33.500H24M12 33.500H2.500V24" fill="none" stroke="#666" stroke-width="5"/></svg></div>
          </div>
          <div class="picker">
            <label>Choose a location:</label>
            <div class="select"><span>View All</span><svg viewBox="0 0 18 12"><path d="M2 2L9 9L16 2" fill="none" stroke="#000" stroke-width="4"/></svg></div>
          </div>
          <div class="btn peg"><svg viewBox="0 0 34 62"><path d="M9 22Q3 22 2 28L1 43L5 45L9 34V60H16V45H18V60H25V34L29 45L33 43L32 28Q31 22 25 22z" fill="#fbbc23" stroke="#7b7457" stroke-width="1.500"/><path d="M12 22H22L17 31z" fill="#f0832a"/><circle cx="17" cy="12" r="10.500" fill="#fbbc23" stroke="#7b7457" stroke-width="1.500"/></svg></div>
          <div class="zoomer"><svg viewBox="0 0 36 36"><path d="M18 0V36M0 18H36" stroke="#666" stroke-width="8"/></svg><i></i><svg viewBox="0 0 36 36"><path d="M0 18H36" stroke="#666" stroke-width="8"/></svg></div>
        </div>
        <div class="credits"><span class="c1">Map data ©2020</span><span class="c2">Terms of Use</span><span class="c3">Report a map error</span></div>
      </div>
    </div>
  </div>
</section>
</body>
</html>
```
FILE: styles.css
```css
* { box-sizing: border-box; }
body { margin: 0; width: 2880px; height: 1800px; overflow: hidden; background: #fff; font-family: Inter, "Open Sans", sans-serif; color: #555; }
svg { display: block; flex: none; }

/* browser chrome */
.tabstrip { display: flex; height: 84px; padding: 16px 16px 0; background: #dfe1e5; }
.tab { position: relative; display: flex; align-items: center; width: 480px; height: 68px; padding: 0 23px 0 24px; background: #fff; border-radius: 16px 16px 0 0; }
.tab::before, .tab::after { content: ""; position: absolute; bottom: 0; width: 16px; height: 16px; }
.tab::before { left: -16px; background: radial-gradient(circle at 0 0, #dfe1e5 15.5px, #fff 16px); }
.tab::after { right: -16px; background: radial-gradient(circle at 100% 0, #dfe1e5 15.5px, #fff 16px); }
.favicon { width: 32px; height: 32px; }
.favicon text { font: 700 13px Inter, sans-serif; fill: #fff; }
.tab-title { flex: 1; margin-left: 16px; font: 24px Roboto, sans-serif; letter-spacing: .68px; color: #3c4043; }
.tab-close { width: 18px; height: 18px; }
.tab-close path { stroke: #3c4043; stroke-width: 3; }
.new-tab { width: 26px; height: 26px; margin: 21px 0 0 31px; }
.new-tab path { stroke: #3c4043; stroke-width: 3.5; }
.toolbar { display: flex; align-items: center; height: 74px; border-bottom: 2px solid #dadce3; background: #fff; }
.nav-buttons { display: flex; gap: 36px; width: 216px; padding-left: 30px; }
.ico { width: 28px; height: 28px; }
.ico path { fill: none; stroke: #5f6368; stroke-width: 3; }
.ico .solid { fill: #5f6368; stroke: none; }
.ico.off path { stroke: #bdc1c6; }
.omnibox { display: flex; align-items: center; width: 2384px; height: 56px; border-radius: 28px; padding: 0 20px 0 22px; background: #f1f3f4; }
.info { width: 28px; height: 28px; fill: none; stroke: #5f6368; stroke-width: 2.6; }
.url { flex: 1; margin-left: 18px; font: 28px Roboto, sans-serif; letter-spacing: .65px; color: #6a6d70; }
.url b { font-weight: 400; color: #202124; }
.star { width: 31px; height: 31px; fill: none; stroke: #5f6368; stroke-width: 2.6; }
.np { width: 31px; margin-left: 28px; font: 700 35px Roboto, sans-serif; color: #f01414; transform: scaleX(.67); transform-origin: left; }
.puzzle { width: 28px; height: 28px; margin-left: 36px; fill: #5f6368; }
.avatar { width: 44px; height: 44px; margin-left: 27px; border-radius: 50%; background: #004d40; color: #fff; font: 22px/44px Roboto, sans-serif; text-align: center; }
.update { width: 32px; height: 32px; margin-left: 26px; }

/* site header */
.site-header { position: relative; z-index: 2; display: flex; align-items: center; justify-content: space-between; height: 140px; padding: 0 300px; background: #fff; box-shadow: 0 2px 8px rgba(0, 0, 0, .2); }
.logo { display: flex; padding-left: 3px; }
.logo-mark { width: 146px; height: 98px; }
.logo-words { width: 400px; height: 98px; margin-left: 14px; overflow: visible; }
.word-1 { font-size: 38.5px; font-weight: 350; fill: #5b2d87; }
.word-2 { font-size: 34px; font-weight: 350; fill: #9b59b6; }
.menu { display: flex; gap: 79px; margin-top: -2px; font-size: 36px; font-weight: 300; color: #9b59b6; white-space: nowrap; }
.menu span { display: inline-block; transform-origin: left; }
.m1 { width: 118px; }
.m1 span { transform: scaleX(1.1); }
.m2 { width: 180px; }
.m2 span { transform: scaleX(1.052); }
.m3 { width: 113px; }
.m3 span { transform: scaleX(1.07); }
.m4 { width: 234px; }
.m4 span { transform: scaleX(1.01); }
.m5 { width: 285px; }
.m5 span { transform: scaleX(1.03); }

/* section */
.where { position: relative; height: 1402px; }
.backdrop { position: absolute; inset: 0; width: 2880px; height: 1402px; }
.backdrop path { vector-effect: non-scaling-stroke; fill: none; stroke-linejoin: round; }
.backdrop .park { fill: #ebf3eb; }
.backdrop .lake { fill: #e6eef8; }
.backdrop .lane { stroke: #f9f9f9; stroke-width: 3.5; }
.backdrop .road { stroke: #f9f3e2; stroke-width: 6; }
.backdrop .wide { stroke-width: 9; }
.backdrop .frontier { stroke: #e4e4e4; stroke-width: 2.5; stroke-dasharray: 9 7; }
.shields text { font: 700 21px Roboto, sans-serif; text-anchor: middle; }
.towns text { font: 31px Roboto, sans-serif; fill: #cdcdcd; stroke: #f8f8f7; stroke-width: 4; paint-order: stroke; }
.towns .minor { font-size: 28px; }
.towns circle { fill: #fbfbfb; stroke: #cdcdcd; stroke-width: 2.5; }

.content { position: relative; display: flex; flex-direction: column; align-items: center; padding-top: 142px; }
h1 { margin: 0; font-size: 70px; line-height: 102px; font-weight: 270; letter-spacing: 2px; color: #555; white-space: nowrap; transform: scaleX(1.15); }
.rule { width: 200px; height: 4px; margin-top: 30px; background: #9b59b6; }
.columns { display: flex; gap: 36px; margin-top: 142px; }
.homes { display: flex; flex-direction: column; gap: 60px; width: 1122px; height: 800px; margin: 0; padding: 60px 0 0 98px; list-style: none; background: #f4f4f4; }
.homes li { display: flex; align-items: flex-start; }
.chev { width: 24px; height: 38px; margin-top: 9px; }
.chev path { fill: none; stroke: #9b59b6; stroke-width: 5.5; stroke-linecap: round; stroke-linejoin: round; }
.homes p { margin: 0 0 0 88px; font-size: 31.5px; line-height: 46px; font-weight: 300; white-space: nowrap; color: #555; transform: scaleX(1.069); transform-origin: left; }
.homes a { color: #9b59b6; letter-spacing: .4px; }
.roomy { letter-spacing: .32px; }
.homes .roomy a { letter-spacing: .75px; }
.tight { letter-spacing: -.35px; }

/* embedded map */
.map { position: relative; width: 1122px; height: 800px; overflow: hidden; }
.tiles { width: 1122px; height: 800px; }
.tiles path { stroke-linejoin: round; }
.tiles g > path { vector-effect: non-scaling-stroke; }
.g { fill: #cae8ca; }
.deep { fill: #b6e3b6; }
.bright { fill: #c6efc6; }
.sand { fill: #fdf4dc; }
.pink { fill: #fbe4e4; }
.b { fill: #a9dbff; }
.stream { fill: none; stroke: #b3ddfb; stroke-width: 2; }
.stream.two { stroke-width: 3; }
.rail { fill: none; stroke: #d3d4d8; stroke-width: 2.5; }
.w { fill: none; stroke: #fff; stroke-width: 4; }
.w.big { stroke-width: 6; }
.t { fill: none; stroke: #fff; stroke-width: 1.8; }
.casing { fill: none; stroke: #f5cf6a; stroke-width: 9px; }
.core { fill: none; stroke: #ffeeac; stroke-width: 6px; }
.mway { stroke-width: 11px; }
.mcore { stroke: #ffe797; stroke-width: 7px; }
.labels text { font: 26px Roboto, sans-serif; fill: #50555b; stroke: #fff; stroke-opacity: .85; stroke-width: 5; stroke-linejoin: round; paint-order: stroke; }
.labels .city { font-size: 32px; font-weight: 500; }
.labels .district { font-size: 20px; font-weight: 500; fill: #8d9ba8; }
.labels .poi { fill: #1a73e8; font-size: 27px; }
.labels .rd { font-size: 22px; fill: #75430f; }
.m-one { font: 700 20px Roboto, sans-serif; fill: #fff; text-anchor: middle; }
.google { font: 500 41px Inter, sans-serif; stroke: #f4f4f2; stroke-width: 4; paint-order: stroke; stroke-linejoin: round; }
.overlay { position: absolute; inset: 0; display: flex; flex-direction: column; align-items: flex-end; padding: 20px; font-family: Roboto, sans-serif; }
.row { display: flex; justify-content: space-between; width: 100%; height: 80px; }
.type, .btn, .zoomer { background: #fff; border-radius: 4px; box-shadow: 0 2px 8px rgba(0, 0, 0, .3); }
.type { display: flex; width: 338px; font-size: 36px; line-height: 80px; text-align: center; color: #565656; }
.type span { width: 198px; }
.type .on { width: 140px; padding-left: 2px; font-weight: 500; color: #000; border-right: 2px solid #e8e8e8; }
.btn { display: flex; align-items: center; justify-content: center; width: 80px; height: 80px; }
.btn svg { width: 36px; height: 36px; }
.picker { width: 304px; height: 130px; margin: 30px -10px 0 0; padding: 16px 10px 0; border: 2px solid #6f7f8e; background: #fff; box-shadow: 4px 4px 10px rgba(0, 0, 0, .4); }
.picker label { display: block; font-size: 24px; line-height: 28px; font-weight: 700; }
.select { display: flex; align-items: center; justify-content: space-between; height: 62px; margin-top: 10px; padding: 0 7px 5px 22px; border: 2px solid #c4c4c4; border-radius: 6px; font-size: 22px; color: #000; }
.select svg { width: 18px; height: 12px; margin-top: 4px; }
.btn.peg { margin-top: 186px; }
.btn.peg svg { width: 34px; height: 62px; margin-right: 2px; }
.zoomer { display: flex; flex-direction: column; align-items: center; justify-content: space-between; width: 80px; height: 162px; margin-top: 64px; padding: 22px 0; }
.zoomer svg { width: 36px; height: 36px; }
.zoomer i { width: 60px; height: 2px; background: #e4e4e4; }
.credits { position: absolute; right: 0; bottom: 0; display: flex; height: 28px; font: 20px/26px Roboto, sans-serif; color: #3c3c3c; white-space: nowrap; }
.credits span { padding-left: 9px; background: rgba(245, 245, 245, .78); border-left: 2px solid #dedede; }
.credits .c1 { width: 173px; padding-left: 10px; border: 0; }
.credits .c2 { width: 143px; }
.credits .c3 { width: 190px; }
```
